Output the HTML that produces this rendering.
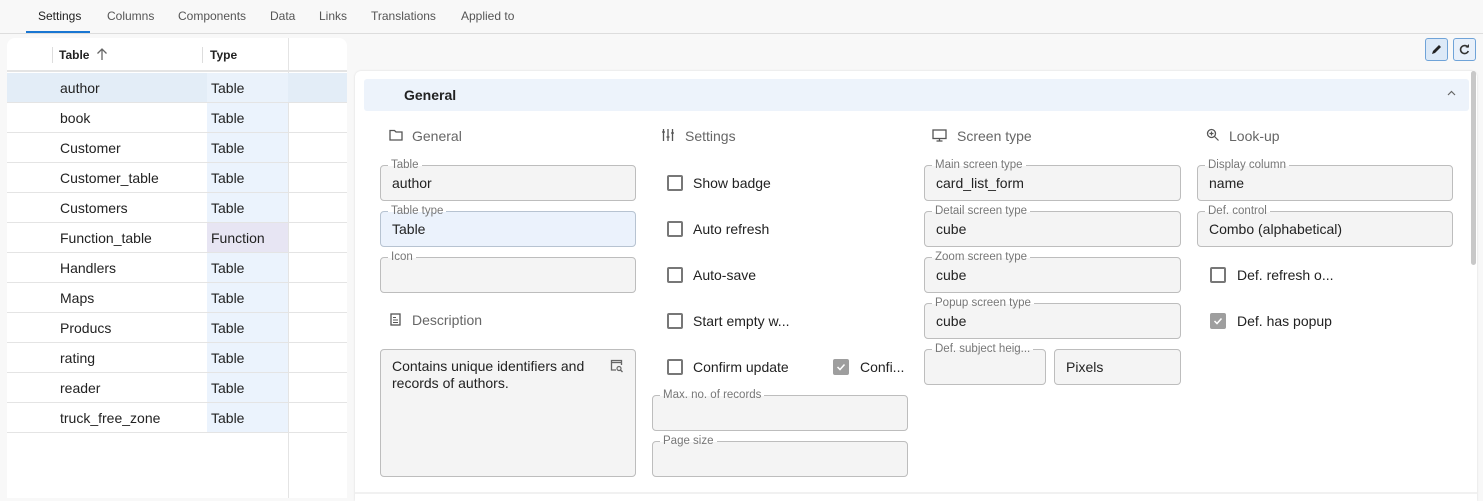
<!DOCTYPE html>
<html><head><meta charset="utf-8"><style>
*{box-sizing:border-box;margin:0;padding:0}
body{width:1483px;height:494px;overflow:hidden;background:#f8f8f8;font-family:"Liberation Sans",sans-serif;color:#222;position:relative}
.a{position:absolute}
.tab{position:absolute;top:9px;font-size:12px;color:#555}
.tbl{left:7px;top:38px;width:340px;height:460px;background:#fff;border-radius:8px 8px 0 0;overflow:hidden}
.row{position:absolute;left:0;width:340px;height:30px;border-bottom:1px solid #e4e4e4;font-size:14px}
.row span{position:absolute;top:7px}
.ty{position:absolute;left:200px;top:0;width:81px;height:29px;background:#ebf3fd}
.card{left:355px;top:71px;width:1122px;height:430px;background:#fff;border-radius:6px 6px 0 0;box-shadow:0 0 2px rgba(0,0,0,.12)}
.f{position:absolute;height:36px;border:1px solid #bdbdbd;border-radius:4px;background:#f4f4f4;font-size:14px}
.f .l{position:absolute;top:-7px;left:7px;font-size:11.5px;color:#777;background:linear-gradient(#fff 55%,#f4f4f4 55%);padding:0 3px;line-height:13px;border-radius:3px}
.f .v{position:absolute;left:11px;top:9px}
.h{position:absolute;font-size:14px;color:#666}
.cb{position:absolute;width:16px;height:16px;border:2px solid #777;border-radius:2px}
.cb.on{background:#9e9e9e;border-color:#9e9e9e}
.cl{position:absolute;font-size:14px}
</style></head><body>
<div class="a" style="left:0;top:33px;width:1483px;height:1px;background:#ddd"></div>
<div class="tab" style="left:38px;color:#222">Settings</div>
<div class="a" style="left:26px;top:31px;width:64px;height:2px;background:#1976d2"></div>
<div class="tab" style="left:107px">Columns</div>
<div class="tab" style="left:178px">Components</div>
<div class="tab" style="left:270px">Data</div>
<div class="tab" style="left:319px">Links</div>
<div class="tab" style="left:371px">Translations</div>
<div class="tab" style="left:461px">Applied to</div>

<div class="a tbl">
 <div class="a" style="left:0;top:0;width:340px;height:34px;border-bottom:2px solid #e4e4e4"></div>
 <div class="a" style="left:45px;top:9px;width:1px;height:16px;background:#ddd"></div>
 <div class="a" style="left:195px;top:9px;width:1px;height:16px;background:#ddd"></div>
 <div class="a" style="left:52px;top:10px;font-size:12px;font-weight:bold">Table</div>
 <svg class="a" style="left:89px;top:9px" width="12" height="14" viewBox="0 0 12 14"><path d="M6 13V2M1.5 6.5L6 2l4.5 4.5" fill="none" stroke="#666" stroke-width="1.3"/></svg>
 <div class="a" style="left:203px;top:10px;font-size:12px;font-weight:bold">Type</div>
 <div class="a" style="left:281px;top:0;width:1px;height:460px;background:#e4e4e4"></div>
 <div class="row" style="top:35px;background:#e3edf7"><span style="left:53px">author</span><div class="ty" style="background:#eaf2fb"></div><span style="left:204px">Table</span></div>
 <div class="row" style="top:65px"><span style="left:53px">book</span><div class="ty"></div><span style="left:204px">Table</span></div>
 <div class="row" style="top:95px"><span style="left:53px">Customer</span><div class="ty"></div><span style="left:204px">Table</span></div>
 <div class="row" style="top:125px"><span style="left:53px">Customer_table</span><div class="ty"></div><span style="left:204px">Table</span></div>
 <div class="row" style="top:155px"><span style="left:53px">Customers</span><div class="ty"></div><span style="left:204px">Table</span></div>
 <div class="row" style="top:185px"><span style="left:53px">Function_table</span><div class="ty" style="background:#e7e5f3"></div><span style="left:204px">Function</span></div>
 <div class="row" style="top:215px"><span style="left:53px">Handlers</span><div class="ty"></div><span style="left:204px">Table</span></div>
 <div class="row" style="top:245px"><span style="left:53px">Maps</span><div class="ty"></div><span style="left:204px">Table</span></div>
 <div class="row" style="top:275px"><span style="left:53px">Producs</span><div class="ty"></div><span style="left:204px">Table</span></div>
 <div class="row" style="top:305px"><span style="left:53px">rating</span><div class="ty"></div><span style="left:204px">Table</span></div>
 <div class="row" style="top:335px"><span style="left:53px">reader</span><div class="ty"></div><span style="left:204px">Table</span></div>
 <div class="row" style="top:365px"><span style="left:53px">truck_free_zone</span><div class="ty"></div><span style="left:204px">Table</span></div>
</div>

<div class="a" style="left:1425px;top:38px;width:23px;height:23px;border:1px solid #6fa3d8;border-radius:3px;background:#dce9f7">
<svg width="21" height="21" viewBox="0 0 21 21"><path d="M6 15l1-3 6-6 2 2-6 6z" fill="#222"/></svg></div>
<div class="a" style="left:1453px;top:38px;width:23px;height:23px;border:1px solid #6fa3d8;border-radius:3px;background:#e8f0fa">
<svg width="21" height="21" viewBox="0 0 21 21"><path d="M14 8.5A4 4 0 1 0 14.3 12" fill="none" stroke="#333" stroke-width="1.6"/><path d="M11.5 8.5h3.5V5z" fill="#333"/></svg></div>

<div class="a card">
 <div class="a" style="left:9px;top:8px;width:1105px;height:32px;background:#edf3fb;border-radius:3px"></div>
 <div class="a" style="left:49px;top:16px;font-size:14px;font-weight:bold">General</div>
 <svg class="a" style="left:1092px;top:19px" width="9" height="6" viewBox="0 0 9 6"><path d="M1 5l3.5-3.5L8 5" fill="none" stroke="#666" stroke-width="1.2"/></svg>
 <div class="a" style="left:1116px;top:0;width:5px;height:194px;background:#c8c8c8;border-radius:3px"></div>
</div>

<svg class="a" style="left:389px;top:129px" width="14" height="12" viewBox="0 0 14 12"><path d="M1 1.5h4.5l1.5 1.5h6v8H1z" fill="none" stroke="#555" stroke-width="1.3"/></svg>
<div class="h" style="left:412px;top:128px">General</div>
<svg class="a" style="left:661px;top:128px" width="14" height="14" viewBox="0 0 14 14" stroke="#555" stroke-width="1.3"><path d="M2.5 1v12M7 1v12M11.5 1v12M1 4h3M5.5 9h3M10 5h3"/></svg>
<div class="h" style="left:685px;top:128px">Settings</div>
<svg class="a" style="left:932px;top:129px" width="15" height="13" viewBox="0 0 15 13"><rect x="1" y="1" width="13" height="8.5" fill="none" stroke="#555" stroke-width="1.3"/><path d="M4.5 12h6M7.5 9.5v2.5" stroke="#555" stroke-width="1.3"/></svg>
<div class="h" style="left:957px;top:128px">Screen type</div>
<svg class="a" style="left:1206px;top:128px" width="14" height="14" viewBox="0 0 14 14"><circle cx="5.5" cy="5.5" r="4" fill="none" stroke="#555" stroke-width="1.3"/><path d="M8.5 8.5l4 4M5.5 3.5v4M3.5 5.5h4" stroke="#555" stroke-width="1.2"/></svg>
<div class="h" style="left:1229px;top:128px">Look-up</div>
<svg class="a" style="left:390px;top:313px" width="11" height="13" viewBox="0 0 11 13"><rect x="1" y="1" width="9" height="11" fill="none" stroke="#555" stroke-width="1.3"/><path d="M3 4.5h3M3 7h5M3 9.5h5" stroke="#555"/></svg>
<div class="h" style="left:412px;top:312px">Description</div>

<div class="f" style="left:380px;top:165px;width:256px"><span class="l">Table</span><span class="v">author</span></div>
<div class="f" style="left:380px;top:211px;width:256px;background:#ebf2fc;border-color:#b7c3d1"><span class="l" style="background:linear-gradient(#fff 55%,#ebf2fc 55%)">Table type</span><span class="v">Table</span></div>
<div class="f" style="left:380px;top:257px;width:256px"><span class="l">Icon</span></div>
<div class="f" style="left:380px;top:349px;width:256px;height:128px"><span class="v" style="top:8px;line-height:17px;width:210px">Contains unique identifiers and records of authors.</span>
<svg class="a" style="left:229px;top:9px" width="14" height="14" viewBox="0 0 14 14"><path d="M6 11H1.5V1.5h10V6" fill="none" stroke="#666" stroke-width="1.3"/><path d="M1.5 3.5h10" stroke="#666" stroke-width="1.3"/><circle cx="9" cy="9.5" r="2" fill="none" stroke="#666" stroke-width="1.2"/><path d="M10.5 11l2 2" stroke="#666" stroke-width="1.3"/></svg></div>

<div class="cb" style="left:667px;top:175px"></div><div class="cl" style="left:693px;top:175px">Show badge</div>
<div class="cb" style="left:667px;top:221px"></div><div class="cl" style="left:693px;top:221px">Auto refresh</div>
<div class="cb" style="left:667px;top:267px"></div><div class="cl" style="left:693px;top:267px">Auto-save</div>
<div class="cb" style="left:667px;top:313px"></div><div class="cl" style="left:693px;top:313px">Start empty w...</div>
<div class="cb" style="left:667px;top:359px"></div><div class="cl" style="left:693px;top:359px">Confirm update</div>
<div class="cb on" style="left:833px;top:359px"><svg class="a" style="left:0;top:0" width="12" height="12" viewBox="0 0 12 12"><path d="M2.5 6l2.5 2.5 4.5-5" fill="none" stroke="#fff" stroke-width="1.5"/></svg></div><div class="cl" style="left:860px;top:359px">Confi...</div>
<div class="f" style="left:652px;top:395px;width:256px"><span class="l">Max. no. of records</span></div>
<div class="f" style="left:652px;top:441px;width:256px"><span class="l">Page size</span></div>

<div class="f" style="left:924px;top:165px;width:257px"><span class="l">Main screen type</span><span class="v">card_list_form</span></div>
<div class="f" style="left:924px;top:211px;width:257px"><span class="l">Detail screen type</span><span class="v">cube</span></div>
<div class="f" style="left:924px;top:257px;width:257px"><span class="l">Zoom screen type</span><span class="v">cube</span></div>
<div class="f" style="left:924px;top:303px;width:257px"><span class="l">Popup screen type</span><span class="v">cube</span></div>
<div class="f" style="left:924px;top:349px;width:122px"><span class="l">Def. subject heig...</span></div>
<div class="f" style="left:1054px;top:349px;width:127px"><span class="v">Pixels</span></div>

<div class="f" style="left:1197px;top:165px;width:256px"><span class="l">Display column</span><span class="v">name</span></div>
<div class="f" style="left:1197px;top:211px;width:256px"><span class="l">Def. control</span><span class="v">Combo (alphabetical)</span></div>
<div class="cb" style="left:1210px;top:267px"></div><div class="cl" style="left:1237px;top:267px">Def. refresh o...</div>
<div class="cb on" style="left:1210px;top:313px"><svg class="a" style="left:0;top:0" width="12" height="12" viewBox="0 0 12 12"><path d="M2.5 6l2.5 2.5 4.5-5" fill="none" stroke="#fff" stroke-width="1.5"/></svg></div><div class="cl" style="left:1237px;top:313px">Def. has popup</div>
<div class="a" style="left:355px;top:492px;width:1122px;height:2px;background:#f1f1f1"></div>
</body></html>
